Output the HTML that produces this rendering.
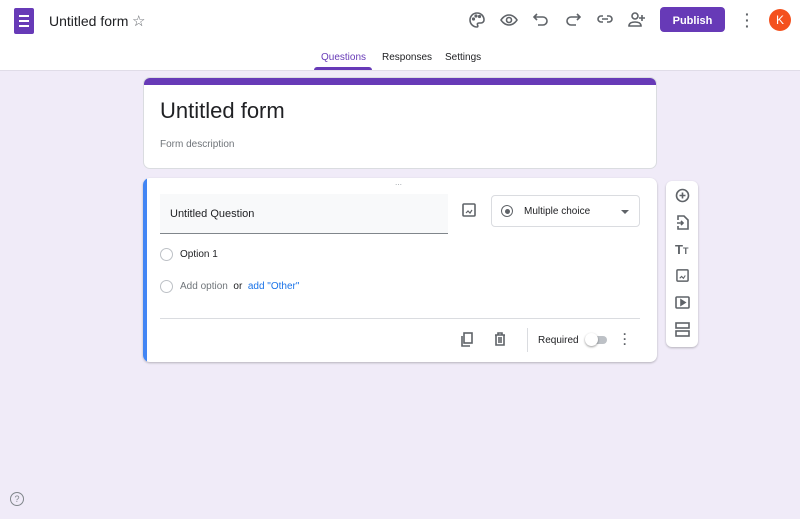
<html><head><style>
body{margin:0;width:800px;height:519px;background:#f0ebf8;font-family:"Liberation Sans",sans-serif;position:relative;overflow:hidden;color:#202124}
.a{position:absolute}
svg{position:absolute;fill:none;stroke:#5f6368;stroke-width:1.6}
</style></head><body>
<div class="a" style="left:0;top:0;width:800px;height:70px;background:#fff;border-bottom:1px solid #e0dce8"></div>
<div class="a" style="left:14px;top:8px;width:20px;height:26px;background:#673ab7;border-radius:2px"></div>
<div class="a" style="left:19px;top:15px;width:10px;height:2px;background:#fff;box-shadow:0 5px #fff,0 10px #fff"></div>
<div class="a" style="left:49px;top:13px;font-size:14px">Untitled form</div>
<div class="a" style="left:132px;top:12px;font-size:15px;color:#5f6368">☆</div>
<svg style="left:468px;top:11px" width="18" height="18" viewBox="0 0 18 18"><path d="M9 2a7 7 0 0 0 0 14c1 0 1-1 .5-2s0-2 1.5-2h2a3 3 0 0 0 3-3c0-4-3-7-7-7z"/><circle cx="5.5" cy="8" r=".8"/><circle cx="8" cy="5" r=".8"/><circle cx="11.5" cy="5.5" r=".8"/></svg>
<svg style="left:500px;top:11px" width="18" height="18" viewBox="0 0 18 18"><path d="M1 9s3-5 8-5 8 5 8 5-3 5-8 5-8-5-8-5z"/><circle cx="9" cy="9" r="2.5"/></svg>
<svg style="left:533px;top:11px" width="16" height="16" viewBox="0 0 16 16"><path d="M4 3L1 6l3 3M1 6h9a4 4 0 0 1 0 8H5"/></svg>
<svg style="left:565px;top:11px" width="16" height="16" viewBox="0 0 16 16"><path d="M12 3l3 3-3 3M15 6H6a4 4 0 0 0 0 8h5"/></svg>
<svg style="left:596px;top:12px" width="18" height="14" viewBox="0 0 18 14"><path d="M7 4H5a3 3 0 0 0 0 6h2M11 4h2a3 3 0 0 1 0 6h-2M6 7h6"/></svg>
<svg style="left:628px;top:10px" width="18" height="18" viewBox="0 0 18 18"><circle cx="7" cy="6" r="3"/><path d="M1 16c0-3 3-4 6-4s6 1 6 4zM14 5v6M11 8h6"/></svg>
<div class="a" style="left:660px;top:7px;width:65px;height:25px;background:#673ab7;border-radius:4px;color:#fff;font-size:11px;font-weight:bold;text-align:center;line-height:25px;padding-top:1px;box-sizing:border-box"><span style="position:relative;top:1px">Publish</span></div>
<div class="a" style="left:745px;top:11px;font-size:14px;color:#5f6368;font-weight:bold;line-height:6px">·<br>·<br>·</div>
<div class="a" style="left:769px;top:9px;width:22px;height:22px;border-radius:50%;background:#f4511e;color:#fff;font-size:12px;text-align:center;line-height:22px">K</div>
<div class="a" style="left:321px;top:52px;font-size:10px;color:#673ab7">Questions</div>
<div class="a" style="left:314px;top:67px;width:58px;height:3px;background:#673ab7;border-radius:3px 3px 0 0"></div>
<div class="a" style="left:382px;top:52px;font-size:10px;color:#202124">Responses</div>
<div class="a" style="left:445px;top:52px;font-size:10px;color:#202124">Settings</div>
<div class="a" style="left:143px;top:77px;width:514px;height:92px;background:#fff;border-radius:7px;border:1px solid #dadce0;box-sizing:border-box;overflow:hidden"><div style="height:7px;background:#673ab7"></div></div>
<div class="a" style="left:160px;top:98px;font-size:22px">Untitled form</div>
<div class="a" style="left:160px;top:139px;font-size:10px;color:#70757a">Form description</div>
<div class="a" style="left:143px;top:178px;width:514px;height:184px;background:#fff;border-radius:7px;box-shadow:0 1px 2px rgba(0,0,0,.25);overflow:hidden"><div style="width:4px;height:100%;background:#4285f4"></div></div>
<div class="a" style="left:395px;top:181px;font-size:7px;color:#9aa0a6;letter-spacing:0">⋯</div>
<div class="a" style="left:160px;top:194px;width:288px;height:39px;background:#f8f9fa;border-bottom:1px solid #80868b"></div>
<div class="a" style="left:170px;top:208px;font-size:11px">Untitled Question</div>
<svg style="left:462px;top:203px" width="14" height="14" viewBox="0 0 14 14"><rect x="1" y="1" width="12" height="12" rx="1"/><path d="M4 10l2-2 2 2 2-3" stroke-width="1.2"/></svg>
<div class="a" style="left:491px;top:195px;width:149px;height:32px;border:1px solid #dadce0;border-radius:4px;box-sizing:border-box"></div>
<div class="a" style="left:501px;top:205px;width:10px;height:10px;border:1.5px solid #5f6368;border-radius:50%"></div>
<div class="a" style="left:505px;top:209px;width:5px;height:5px;background:#5f6368;border-radius:50%"></div>
<div class="a" style="left:524px;top:206px;font-size:10px">Multiple choice</div>
<div class="a" style="left:621px;top:210px;border:4px solid transparent;border-top-color:#5f6368"></div>
<div class="a" style="left:160px;top:248px;width:11px;height:11px;border:1px solid #bdc1c6;border-radius:50%"></div>
<div class="a" style="left:180px;top:249px;font-size:10px">Option 1</div>
<div class="a" style="left:160px;top:280px;width:11px;height:11px;border:1px solid #bdc1c6;border-radius:50%"></div>
<div class="a" style="left:180px;top:281px;font-size:10px;color:#70757a">Add option <span style="color:#202124">&nbsp;or&nbsp;</span> <span style="color:#1a73e8">add "Other"</span></div>
<div class="a" style="left:160px;top:318px;width:480px;height:1px;background:#dadce0"></div>
<svg style="left:460px;top:332px" width="14" height="15" viewBox="0 0 14 15"><rect x="4" y="1" width="8" height="10"/><path d="M2 4v10h8"/></svg>
<svg style="left:494px;top:332px" width="12" height="14" viewBox="0 0 12 14"><path d="M1 3h10M4 3V1h4v2M2 3v10h8V3M5 5v6M7 5v6"/></svg>
<div class="a" style="left:527px;top:328px;width:1px;height:24px;background:#dadce0"></div>
<div class="a" style="left:538px;top:335px;font-size:10px">Required</div>
<div class="a" style="left:587px;top:336px;width:20px;height:8px;background:#bdc1c6;border-radius:4px"></div>
<div class="a" style="left:585px;top:333px;width:13px;height:13px;background:#fff;border-radius:50%;box-shadow:0 1px 2px rgba(0,0,0,.4)"></div>
<div class="a" style="left:623px;top:332px;font-size:12px;color:#5f6368;font-weight:bold;line-height:5px">·<br>·<br>·</div>
<div class="a" style="left:666px;top:181px;width:32px;height:166px;background:#fff;border-radius:6px;box-shadow:0 1px 2px rgba(0,0,0,.25)"></div>
<svg style="left:675px;top:188px" width="15" height="15" viewBox="0 0 15 15"><circle cx="7.5" cy="7.5" r="6"/><path d="M7.5 4.5v6M4.5 7.5h6"/></svg>
<svg style="left:676px;top:215px" width="13" height="15" viewBox="0 0 13 15"><path d="M2 5V1h6l4 4v9H2v-3M1 8h6M5 6l2 2-2 2"/></svg>
<div class="a" style="left:675px;top:242px;font-size:13px;font-weight:bold;color:#5f6368">T<span style="font-size:9px">T</span></div>
<svg style="left:676px;top:269px" width="13" height="13" viewBox="0 0 14 14"><rect x="1" y="1" width="12" height="12" rx="1"/><path d="M4 10l2-2 2 2 2-3" stroke-width="1.2"/></svg>
<svg style="left:675px;top:296px" width="15" height="13" viewBox="0 0 15 13"><rect x="1" y="1" width="13" height="11" rx="1"/><path d="M6 4v5l4-2.5z" fill="#5f6368"/></svg>
<svg style="left:675px;top:322px" width="15" height="15" viewBox="0 0 15 15"><rect x="1" y="1" width="13" height="5"/><rect x="1" y="9" width="13" height="5"/></svg>
<div class="a" style="left:10px;top:492px;width:12px;height:12px;border:1.3px solid #80868b;border-radius:50%;font-size:9px;color:#80868b;text-align:center;line-height:12px">?</div>
</body></html>
